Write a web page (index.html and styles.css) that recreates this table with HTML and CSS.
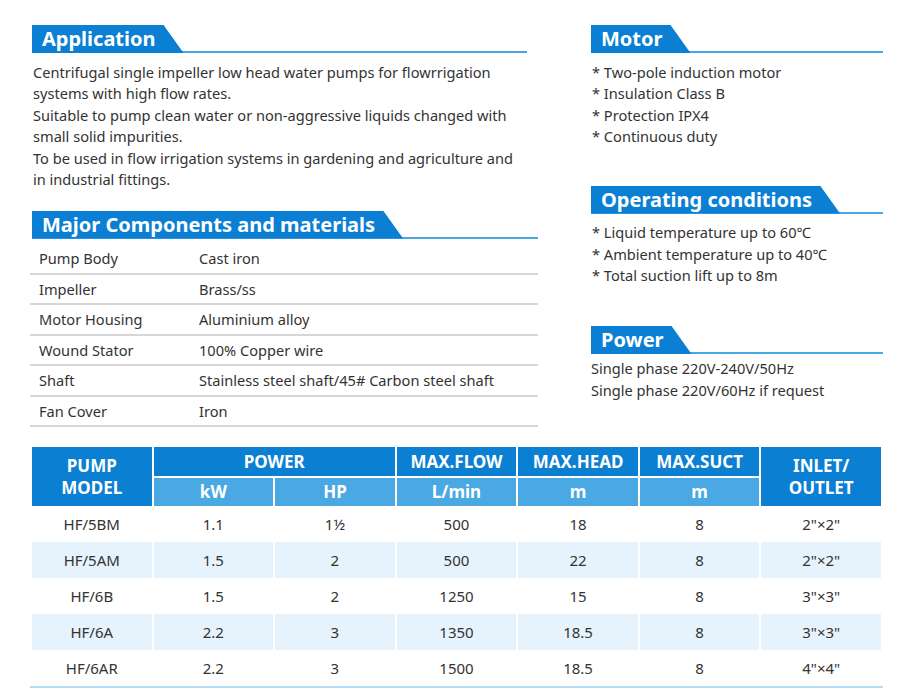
FILE: index.html
```html
<!DOCTYPE html>
<html>
<head>
<meta charset="utf-8">
<link rel="stylesheet" href="styles.css">
</head>
<body>
<div class="page">
  <div class="top">
    <div class="left">
      <section class="app">
        <div class="head"><h2>Application</h2></div>
        <p class="txt">Centrifugal single impeller low head water pumps for flowrrigation systems with high flow rates.<br>Suitable to pump clean water or non-aggressive liquids changed with small solid impurities.<br>To be used in flow irrigation systems in gardening and agriculture and in industrial fittings.</p>
      </section>
      <section class="comp">
        <div class="head"><h2>Major Components and materials</h2></div>
        <div class="mat">
          <div class="row"><span class="k">Pump Body</span><span>Cast iron</span></div>
          <div class="row"><span class="k">Impeller</span><span>Brass/ss</span></div>
          <div class="row"><span class="k">Motor Housing</span><span>Aluminium alloy</span></div>
          <div class="row"><span class="k">Wound Stator</span><span>100% Copper wire</span></div>
          <div class="row"><span class="k">Shaft</span><span>Stainless steel shaft/45# Carbon steel shaft</span></div>
          <div class="row"><span class="k">Fan Cover</span><span>Iron</span></div>
        </div>
      </section>
    </div>
    <div class="right">
      <section>
        <div class="head"><h2>Motor</h2></div>
        <p class="txt list">* Two-pole induction motor<br>* Insulation Class B<br>* Protection IPX4<br>* Continuous duty</p>
      </section>
      <section class="op">
        <div class="head"><h2>Operating conditions</h2></div>
        <p class="txt list">* Liquid temperature up to 60℃<br>* Ambient temperature up to 40℃<br>* Total suction lift up to 8m</p>
      </section>
      <section class="pw">
        <div class="head"><h2>Power</h2></div>
        <p class="txt pwtxt">Single phase 220V-240V/50Hz<br>Single phase 220V/60Hz if request</p>
      </section>
    </div>
  </div>
  <div class="spec-wrap">
    <table class="spec">
      <thead>
        <tr class="h1">
          <th rowspan="2">PUMP<br>MODEL</th>
          <th colspan="2">POWER</th>
          <th>MAX.FLOW</th>
          <th>MAX.HEAD</th>
          <th>MAX.SUCT</th>
          <th rowspan="2">INLET/<br>OUTLET</th>
        </tr>
        <tr class="h2">
          <th>kW</th><th>HP</th><th>L/min</th><th>m</th><th>m</th>
        </tr>
      </thead>
      <tbody>
        <tr><td>HF/5BM</td><td>1.1</td><td>1½</td><td>500</td><td>18</td><td>8</td><td>2"×2"</td></tr>
        <tr class="alt"><td>HF/5AM</td><td>1.5</td><td>2</td><td>500</td><td>22</td><td>8</td><td>2"×2"</td></tr>
        <tr><td>HF/6B</td><td>1.5</td><td>2</td><td>1250</td><td>15</td><td>8</td><td>3"×3"</td></tr>
        <tr class="alt"><td>HF/6A</td><td>2.2</td><td>3</td><td>1350</td><td>18.5</td><td>8</td><td>3"×3"</td></tr>
        <tr><td>HF/6AR</td><td>2.2</td><td>3</td><td>1500</td><td>18.5</td><td>8</td><td>4"×4"</td></tr>
      </tbody>
    </table>
  </div>
</div>
</body>
</html>
```

FILE: styles.css
```css
html, body {
  margin: 0;
  padding: 0;
  background: #fff;
}
body {
  font-family: "Noto Sans", "Open Sans", sans-serif;
  color: #333;
}
.page {
  padding: 25px 0 0 30px;
  width: 855px;
}
.top {
  display: grid;
  grid-template-columns: 508px 292px;
  column-gap: 53px;
}
.head {
  display: flex;
  height: 28px;
  background: linear-gradient(to top, #4aa6e4 2px, transparent 2px);
}
.head h2 {
  margin: 0;
  height: 28px;
  line-height: 28px;
  font-size: 20px;
  font-weight: 700;
  color: #fff;
  background: #0b7fd3;
  padding: 0 28px 0 10px;
  clip-path: polygon(0 0, calc(100% - 20px) 0, 100% 100%, 0 100%);
}
.app {
  width: 495px;
  margin-left: 2px;
}
.comp .head {
  margin-left: 2px;
}
.txt {
  margin: 8.5px 0 0 1px;
  font-size: 14.6px;
  line-height: 21.5px;
}
.comp {
  margin-top: 20px;
}
.mat {
  padding-top: 5.5px;
}
.row {
  display: flex;
  height: 28.5px;
  align-items: center;
  border-bottom: 2px solid #d6d6d6;
  font-size: 14.6px;
}
.row .k {
  width: 160px;
  padding-left: 9px;
}
.right section {
  margin: 0;
}
.right .op {
  margin-top: 38px;
}
.right .pw {
  margin-top: 39.5px;
}
.pwtxt {
  margin-top: 4px;
  margin-left: 0;
}
.spec-wrap {
  margin-top: 20px;
  width: 853px;
  border-bottom: 2px solid #b4dcf6;
}
.spec {
  width: 853px;
  table-layout: fixed;
  border-collapse: separate;
  border-spacing: 2px 0;
}
.spec th {
  color: #fff;
  font-weight: 700;
  font-size: 17px;
  text-align: center;
  padding: 0;
  line-height: 22px;
}
.spec .h1 th {
  background: #0b80d3;
  height: 29px;
  border-bottom: 2px solid #fff;
}
.spec .h1 th[rowspan] {
  border-bottom: 0;
}
.spec .h2 th {
  background: #4aa8e2;
  height: 28px;
}
.spec td {
  text-align: center;
  font-size: 15px;
  height: 36px;
  padding: 0;
  color: #333;
}
.spec .alt td {
  background: #e6f3fd;
}
```
